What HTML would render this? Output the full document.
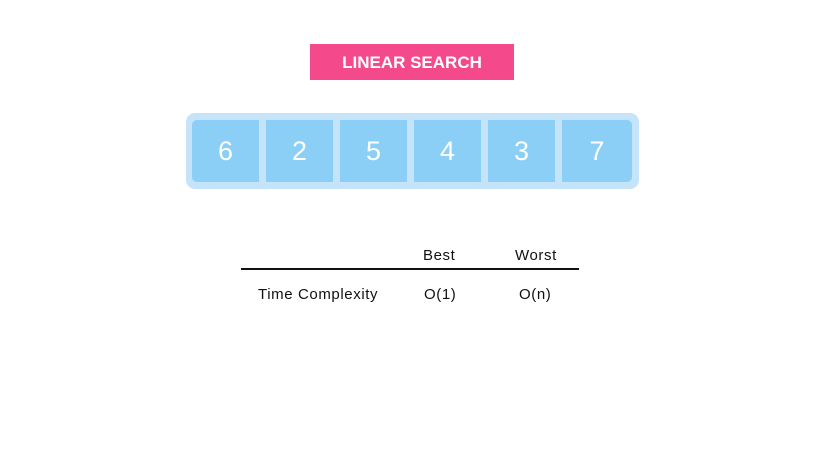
<!DOCTYPE html>
<html><head><style>
body{margin:0;width:827px;height:462px;background:#fff;position:relative;font-family:"Liberation Sans",sans-serif;overflow:hidden}
.t{position:absolute;left:310px;top:44px;width:204px;height:36px;background:#f4498b;color:#fff;font-weight:bold;font-size:17px;line-height:37px;text-align:center;letter-spacing:0px}
.o{position:absolute;left:186px;top:113px;width:453px;height:76px;background:#c5e3f9;border-radius:9px}
.c{position:absolute;top:120px;width:67px;height:62px;background:#8bcff6;color:#fff;font-size:27px;line-height:62px;text-align:center}
.s{position:absolute;font-size:15px;color:#111;letter-spacing:0.6px}
.l{position:absolute;left:241px;top:268px;width:338px;height:2px;background:#111}
</style></head><body>
<div class="t">LINEAR SEARCH</div>
<div class="o"></div>
<div class="c" style="left:192px;border-radius:5px 0 0 5px">6</div>
<div class="c" style="left:266px">2</div>
<div class="c" style="left:340px">5</div>
<div class="c" style="left:414px">4</div>
<div class="c" style="left:488px">3</div>
<div class="c" style="left:562px;width:70px;border-radius:0 5px 5px 0">7</div>
<div class="s" style="left:423px;top:247px">Best</div>
<div class="s" style="left:515px;top:247px">Worst</div>
<div class="l"></div>
<div class="s" style="left:258px;top:286px">Time Complexity</div>
<div class="s" style="left:424px;top:286px">O(1)</div>
<div class="s" style="left:519px;top:286px">O(n)</div>
</body></html>
